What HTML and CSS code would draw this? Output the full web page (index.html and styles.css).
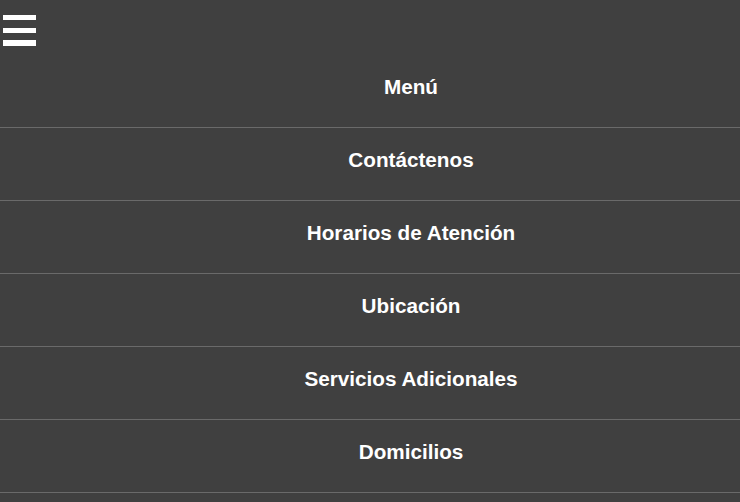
FILE: index.html
```html
<!DOCTYPE html>
<html lang="es">
<head>
<meta charset="utf-8">
<title>Menú</title>
<link rel="stylesheet" href="styles.css">
</head>
<body>
<header class="top">
  <svg class="burger" width="33" height="31" viewBox="0 0 33 31" aria-label="menu">
    <rect x="0" y="0" width="33" height="5" fill="#fff"/>
    <rect x="0" y="13" width="33" height="5" fill="#fff"/>
    <rect x="0" y="25" width="33" height="6" fill="#fff"/>
  </svg>
</header>
<nav class="nav">
  <a class="item" href="#">Menú</a>
  <a class="item" href="#">Contáctenos</a>
  <a class="item" href="#">Horarios de Atención</a>
  <a class="item" href="#">Ubicación</a>
  <a class="item" href="#">Servicios Adicionales</a>
  <a class="item" href="#">Domicilios</a>
</nav>
</body>
</html>
```
FILE: styles.css
```css
html, body {
  margin: 0;
  padding: 0;
  background: #404040;
}
body {
  font-family: "Liberation Sans", Arial, sans-serif;
  color: #fff;
}
.top {
  height: 55px;
  padding: 15px 0 0 3px;
  box-sizing: border-box;
}
.burger {
  display: block;
}
.nav {
  display: flex;
  flex-direction: column;
}
.item {
  display: flex;
  align-items: center;
  justify-content: center;
  height: 73px;
  box-sizing: border-box;
  padding: 0 0 8px 82px;
  border-bottom: 1px solid #6a6a6a;
  color: #fff;
  text-decoration: none;
  font-weight: bold;
  font-size: 20.7px;
}
```
